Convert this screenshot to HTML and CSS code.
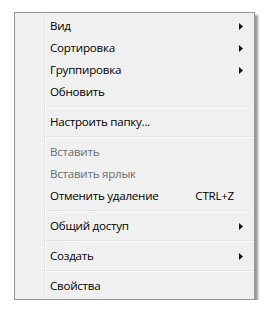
FILE: index.html
```html
<!DOCTYPE html>
<html>
<head>
<meta charset="utf-8">
<link rel="stylesheet" href="styles.css">
</head>
<body>
<div class="menu">
  <div class="item"><span class="label">Вид</span><svg class="arrow" width="4" height="7" viewBox="0 0 4 7"><path d="M0 0 L4 3.5 L0 7 Z"/></svg></div>
  <div class="item"><span class="label">Сортировка</span><svg class="arrow" width="4" height="7" viewBox="0 0 4 7"><path d="M0 0 L4 3.5 L0 7 Z"/></svg></div>
  <div class="item"><span class="label">Группировка</span><svg class="arrow" width="4" height="7" viewBox="0 0 4 7"><path d="M0 0 L4 3.5 L0 7 Z"/></svg></div>
  <div class="item"><span class="label">Обновить</span></div>
  <div class="sep"></div>
  <div class="item"><span class="label">Настроить папку...</span></div>
  <div class="sep"></div>
  <div class="item disabled"><span class="label">Вставить</span></div>
  <div class="item disabled"><span class="label">Вставить ярлык</span></div>
  <div class="item"><span class="label">Отменить удаление</span><span class="shortcut">CTRL+Z</span></div>
  <div class="sep"></div>
  <div class="item"><span class="label">Общий доступ</span><svg class="arrow" width="4" height="7" viewBox="0 0 4 7"><path d="M0 0 L4 3.5 L0 7 Z"/></svg></div>
  <div class="sep"></div>
  <div class="item"><span class="label">Создать</span><svg class="arrow" width="4" height="7" viewBox="0 0 4 7"><path d="M0 0 L4 3.5 L0 7 Z"/></svg></div>
  <div class="sep"></div>
  <div class="item"><span class="label">Свойства</span></div>
</div>
</body>
</html>
```
FILE: styles.css
```css
html, body {
  margin: 0;
  padding: 0;
  background: #ffffff;
}
body {
  padding: 12px 0 0 14px;
  font-family: "Open Sans", "Noto Sans", sans-serif;
  font-size: 11.6px;
  letter-spacing: -0.25px;
  color: #000;
}
.menu {
  box-sizing: border-box;
  width: 241px;
  height: 288px;
  border: 1px solid #979797;
  background-color: #f0f0f0;
  background-image: linear-gradient(to right, transparent 29px, #e2e3e3 29px, #e2e3e3 30px, #ffffff 30px, #ffffff 31px, transparent 31px);
  box-shadow: 3px 3px 2px rgba(0, 0, 0, 0.4);
  padding: 2px 2px;
  display: flex;
  flex-direction: column;
}
.item {
  height: 22px;
  display: flex;
  align-items: center;
  padding-left: 33px;
  padding-right: 9px;
  line-height: 22px;
}
.label {
  flex: 1;
  white-space: nowrap;
}
.disabled {
  color: #6d6d6d;
}
.shortcut {
  padding-right: 9px;
}
.arrow {
  fill: #111;
  display: block;
}
.sep {
  height: 8px;
  margin-left: 28px;
  display: flex;
  flex-direction: column;
  justify-content: center;
}
.sep::before {
  content: "";
  display: block;
  height: 1px;
  background: #e0e0e0;
}
.sep::after {
  content: "";
  display: block;
  height: 1px;
  background: #ffffff;
}
```
